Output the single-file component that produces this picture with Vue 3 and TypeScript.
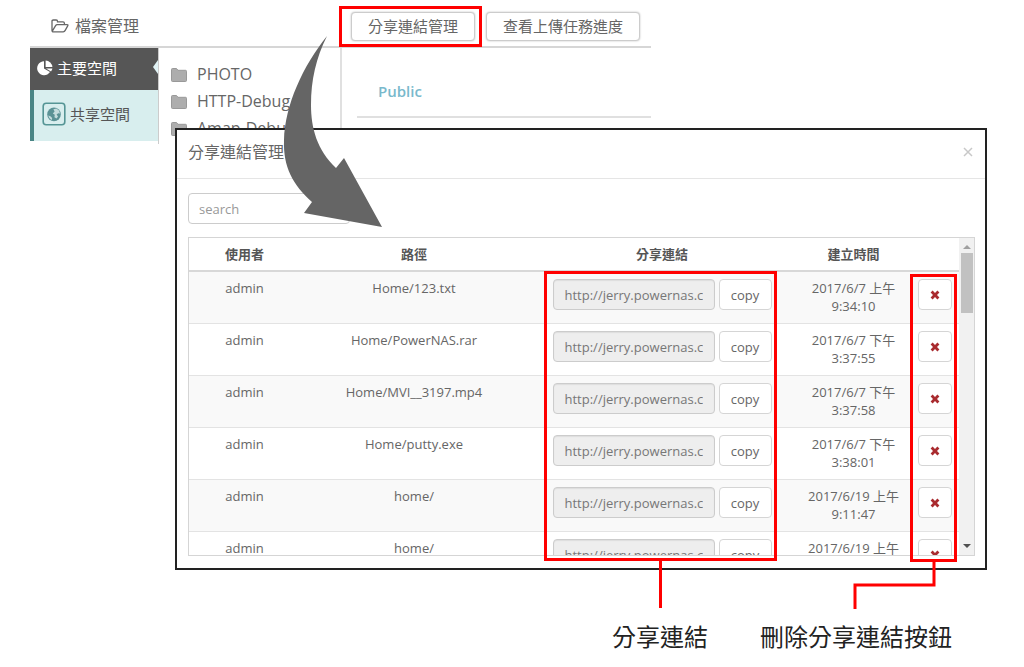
<script setup lang="ts">
import { ref } from 'vue'

interface ShareLink {
  id: number
  user: string
  path: string
  url: string
  day: string
  time: string
}

const url = 'http://jerry.powernas.com/share'

const folders: string[] = ['PHOTO', 'HTTP-Debug', 'Amap-Debug']

const links = ref<ShareLink[]>([
  { id: 1, user: 'admin', path: 'Home/123.txt', url, day: '2017/6/7 上午', time: '9:34:10' },
  { id: 2, user: 'admin', path: 'Home/PowerNAS.rar', url, day: '2017/6/7 下午', time: '3:37:55' },
  { id: 3, user: 'admin', path: 'Home/MVI__3197.mp4', url, day: '2017/6/7 下午', time: '3:37:58' },
  { id: 4, user: 'admin', path: 'Home/putty.exe', url, day: '2017/6/7 下午', time: '3:38:01' },
  { id: 5, user: 'admin', path: 'home/', url, day: '2017/6/19 上午', time: '9:11:47' },
  { id: 6, user: 'admin', path: 'home/', url, day: '2017/6/19 上午', time: '9:12:05' },
])

const keyword = ref('')

function removeLink(id: number): void {
  links.value = links.value.filter((link) => link.id !== id)
}
</script>

<template>
  <main class="guide">
    <section class="manager">
      <header class="topbar">
        <h1 class="brand">
          <svg class="brand-icon" viewBox="0 0 18 14" aria-hidden="true">
            <path d="M1 11.5V2.3Q1 1 2.3 1H5.2Q6.5 1 6.5 2.3V2.8H12Q13.4 2.8 13.4 4.2V5.6M1.3 12.2L4.6 6.6Q5.2 5.6 6.2 5.6H16Q17.5 5.6 16.7 6.9L14.2 11.4Q13.5 12.8 12.2 12.8H2.4Q1 12.8 1 11.5" />
          </svg>
          檔案管理
        </h1>
        <div class="actions">
          <div class="marked">
            <button type="button" class="tool">分享連結管理</button>
          </div>
          <button type="button" class="tool">查看上傳任務進度</button>
        </div>
      </header>
      <div class="panes">
        <nav class="spaces">
          <a href="#main" class="space active">
            <svg class="pie" viewBox="0 0 16 16" aria-hidden="true">
              <path d="M7 1.2A7 7 0 1 0 13 12L7 8.4Z" />
              <path d="M8.6 0.6A7 7 0 0 1 15.4 7H8.6Z" />
              <path d="M9 8.4H15.4A7 7 0 0 1 14 11.4Z" />
            </svg>
            主要空間
          </a>
          <a href="#shared" class="space shared">
            <svg class="globe" viewBox="0 0 24 24" aria-hidden="true">
              <rect x="1.2" y="1.2" width="21.6" height="21.6" rx="3" class="globe-frame" />
              <circle cx="12" cy="12.4" r="6.8" class="globe-land" />
              <path d="M11.4 7.2L14.4 6.4L17 8.6L18 11.6L16.2 11.2L14.6 12.6L16 14.6L14.6 16.6L12.4 15.2L12.8 12.8L10.8 11.4L12.6 9.4ZM6.2 13.4L8.4 14.2L10.2 16L9.6 18.2Q7 16.8 6.2 13.4Z" class="globe-sea" />
            </svg>
            共享空間
          </a>
        </nav>
        <ul class="folders">
          <li v-for="name in folders" :key="name">
            <svg class="folder" viewBox="0 0 16 14" aria-hidden="true">
              <path d="M0.5 1.5Q0.5 0.5 1.5 0.5H5.5L7 2.3H14.5Q15.5 2.3 15.5 3.3V12.5Q15.5 13.5 14.5 13.5H1.5Q0.5 13.5 0.5 12.5Z" />
            </svg>
            {{ name }}
          </li>
        </ul>
        <div class="content">
          <h2 class="location">Public</h2>
        </div>
      </div>
    </section>

    <section class="dialog" role="dialog" aria-labelledby="dialog-title">
      <header class="dialog-head">
        <h2 id="dialog-title" class="dialog-title">分享連結管理</h2>
        <button type="button" class="close" aria-label="關閉">
          <svg viewBox="0 0 10 10" aria-hidden="true"><path d="M1 1L9 9M9 1L1 9" /></svg>
        </button>
      </header>
      <div class="dialog-body">
        <input v-model="keyword" type="text" class="search" placeholder="search" aria-label="search" />
        <div class="listing">
          <div class="viewport">
            <table class="links">
              <thead>
                <tr>
                  <th class="col-user">使用者</th>
                  <th>路徑</th>
                  <th class="col-link">分享連結</th>
                  <th class="col-time">建立時間</th>
                  <th class="col-delete"></th>
                </tr>
              </thead>
              <tbody>
                <tr v-for="link in links" :key="link.id">
                  <td>{{ link.user }}</td>
                  <td>{{ link.path }}</td>
                  <td>
                    <div class="share">
                      <input type="text" class="url" readonly :value="link.url" aria-label="分享連結" />
                      <button type="button" class="copy">copy</button>
                    </div>
                  </td>
                  <td>{{ link.day }}<br />{{ link.time }}</td>
                  <td>
                    <button type="button" class="remove" aria-label="刪除" @click="removeLink(link.id)">
                      <svg viewBox="0 0 10 10" aria-hidden="true">
                        <path d="M2.6 0.6L5 3L7.4 0.6L9.4 2.6L7 5L9.4 7.4L7.4 9.4L5 7L2.6 9.4L0.6 7.4L3 5L0.6 2.6Z" />
                      </svg>
                    </button>
                  </td>
                </tr>
              </tbody>
            </table>
          </div>
          <div class="scrollbar" aria-hidden="true">
            <span class="arrow up"></span>
            <span class="thumb"></span>
            <span class="arrow down"></span>
          </div>
        </div>
      </div>
      <div class="frame frame-link"></div>
      <div class="frame frame-delete"></div>
      <div class="lead lead-link"></div>
      <svg class="lead lead-delete" viewBox="0 0 83 47" aria-hidden="true">
        <path d="M81 0V23H2V47" />
      </svg>
    </section>

    <svg class="pointer" viewBox="0 0 100 192" aria-hidden="true">
      <path d="M44 0C20 30 2 69 1 104C0 131 10 149 29 166L21 177L99 191L61 122L53 132C34 114 28 92 28 69C28 44 33 22 44 0Z" />
    </svg>

    <footer class="captions">
      <span>分享連結</span>
      <span>刪除分享連結按鈕</span>
    </footer>
  </main>
</template>

<style>
body {
  margin: 0;
  background: #fff;
}
</style>

<style scoped>
.guide,
.guide * {
  box-sizing: border-box;
}

.guide {
  position: relative;
  min-width: 900px;
  font-family: "Open Sans", "Noto Sans CJK TC", sans-serif;
  font-size: 13px;
  line-height: 18px;
  color: #666;
}

button,
input {
  margin: 0;
  font: inherit;
  color: inherit;
}

h1,
h2 {
  margin: 0;
  font-weight: 400;
}

.manager {
  margin: 0 373px 0 30px;
}

.topbar {
  display: flex;
  align-items: center;
  height: 48px;
  padding-top: 6px;
  border-bottom: 2px solid #d6d6d6;
}

.brand {
  display: flex;
  align-items: center;
  gap: 6px;
  width: 309px;
  padding-left: 21px;
  font-size: 16px;
  line-height: 24px;
}

.brand-icon {
  width: 18px;
  height: 14px;
  fill: none;
  stroke: #666;
  stroke-width: 1.3;
}

.actions {
  display: flex;
  align-items: center;
  gap: 4px;
  white-space: nowrap;
}

.marked {
  position: relative;
  z-index: 1;
  padding: 3px 4px 3px 9px;
  border: 3px solid #f00;
}

.tool {
  height: 29px;
  padding: 0 16px;
  border: 1px solid #ccc;
  border-radius: 4px;
  background: #fff;
  box-shadow: 0 0 2px #bbb;
  font-size: 15px;
  line-height: 24px;
}

.panes {
  display: flex;
  height: 96px;
  overflow: hidden;
}

.spaces {
  width: 129px;
  border-right: 1px solid #ccc;
  font-size: 15px;
}

.space {
  position: relative;
  display: flex;
  align-items: center;
  padding-bottom: 3px;
  color: #555;
  text-decoration: none;
}

.active {
  gap: 4px;
  height: 42px;
  padding-left: 7px;
  background: #565656;
  color: #fff;
}

.active::after {
  content: "";
  position: absolute;
  top: 12px;
  right: 0;
  border: solid transparent;
  border-width: 7px 5px 7px 0;
  border-right-color: #e2f4f6;
}

.pie {
  width: 16px;
  height: 16px;
  fill: #fff;
}

.shared {
  gap: 4px;
  height: 51px;
  padding-left: 8px;
  border-left: 4px solid #4a8585;
  background: #d8eeee;
}

.globe {
  width: 24px;
  height: 24px;
}

.globe-frame {
  fill: none;
  stroke: #559595;
  stroke-width: 1.6;
}

.globe-sea {
  fill: #c4dcdd;
}

.globe-land {
  fill: #5b9295;
}

.folders {
  width: 183px;
  margin: 0;
  padding: 13px 0 0 12px;
  border-right: 2px solid #e0e0e0;
  list-style: none;
  font-size: 16px;
  line-height: 27px;
}

.folders li {
  display: flex;
  align-items: center;
  gap: 10px;
}

.folder {
  width: 16px;
  height: 14px;
  fill: #adadad;
  stroke: #999;
  stroke-width: 1;
}

.content {
  flex: 1;
  padding-left: 15px;
}

.location {
  height: 70px;
  padding: 31px 0 0 21px;
  border-bottom: 2px solid #e0e0e0;
  font-size: 15px;
  line-height: 24px;
  font-weight: 600;
  color: #79b9cc;
}

.dialog {
  position: relative;
  margin: -16px 37px 0 175px;
  border: 2px solid #222;
  background: #fff;
}

.dialog-head {
  display: flex;
  align-items: center;
  justify-content: space-between;
  height: 49px;
  padding: 0 12px 4px 11px;
  border-bottom: 1px solid #e5e5e5;
}

.dialog-title {
  font-size: 16px;
  line-height: 24px;
}

.close {
  display: flex;
  padding: 0;
  border: 0;
  background: none;
}

.close svg {
  width: 10px;
  height: 10px;
  stroke: #c8c8c8;
  stroke-width: 1.5;
}

.dialog-body {
  padding: 14px 10px 12px 11px;
}

.search {
  display: block;
  width: 162px;
  height: 31px;
  padding: 0 10px;
  border: 1px solid #ccc;
  border-radius: 4px;
}

.search::placeholder {
  color: #999;
}

.listing {
  display: flex;
  height: 319px;
  margin-top: 13px;
  border: 1px solid #d5d5d5;
}

.viewport {
  flex: 1;
  overflow: hidden;
}

.links {
  width: 100%;
  table-layout: fixed;
  border-collapse: separate;
  border-spacing: 0;
  text-align: center;
}

.links th {
  height: 34px;
  padding: 0;
  border-bottom: 2px solid #d8d8d8;
  font-weight: 700;
  color: #555;
}

.links td {
  height: 52px;
  padding: 7px 0;
  border-bottom: 1px solid #e3e3e3;
  vertical-align: top;
}

.links tbody tr:nth-child(odd) {
  background: #f9f9f9;
}

.col-user {
  width: 111px;
}

.col-link {
  width: 268px;
}

.col-time {
  width: 115px;
}

.col-delete {
  width: 48px;
}

.share {
  display: flex;
  justify-content: center;
  gap: 4px;
}

.url {
  width: 162px;
  height: 31px;
  padding: 0 11px;
  border: 1px solid #ccc;
  border-radius: 4px;
  background: #eee;
  box-shadow: inset 0 1px 1px #ddd;
  color: #777;
}

.copy,
.remove {
  height: 31px;
  padding: 0;
  border: 1px solid #d5d5d5;
  border-radius: 4px;
  background: #fff;
}

.copy {
  width: 53px;
}

.remove {
  display: inline-flex;
  align-items: center;
  justify-content: center;
  width: 34px;
  vertical-align: top;
}

.remove svg {
  width: 10px;
  height: 10px;
  fill: #a92b2f;
}

.scrollbar {
  display: flex;
  flex-direction: column;
  align-items: center;
  width: 15px;
  padding: 7px 0;
  background: #f1f1f1;
}

.thumb {
  width: 12px;
  height: 60px;
  margin: 4px 0 auto;
  background: #c1c1c1;
}

.arrow {
  border: solid transparent;
}

.up {
  border-width: 0 4px 4px;
  border-bottom-color: #a0a0a0;
}

.down {
  border-width: 4px 4px 0;
  border-top-color: #505050;
}

.frame,
.lead {
  position: absolute;
  pointer-events: none;
}

.frame {
  border: 3px solid #f00;
}

.frame-link {
  top: 141px;
  right: 208px;
  bottom: 7px;
  width: 233px;
}

.frame-delete {
  top: 144px;
  right: 28px;
  bottom: 6px;
  width: 47px;
}

.lead-link {
  top: calc(100% - 7px);
  right: 323px;
  width: 3px;
  height: 47px;
  background: #f00;
}

.lead-delete {
  top: calc(100% - 6px);
  right: 49px;
  width: 83px;
  height: 47px;
  fill: none;
  stroke: #f00;
  stroke-width: 3;
}

.pointer {
  position: absolute;
  top: 36px;
  left: 283px;
  z-index: 2;
  width: 100px;
  height: 192px;
  fill: #656565;
  pointer-events: none;
}

.captions {
  display: flex;
  justify-content: flex-end;
  gap: 52px;
  padding: 51px 72px 12px 0;
  font-size: 24px;
  line-height: 32px;
  color: #222;
}
</style>
